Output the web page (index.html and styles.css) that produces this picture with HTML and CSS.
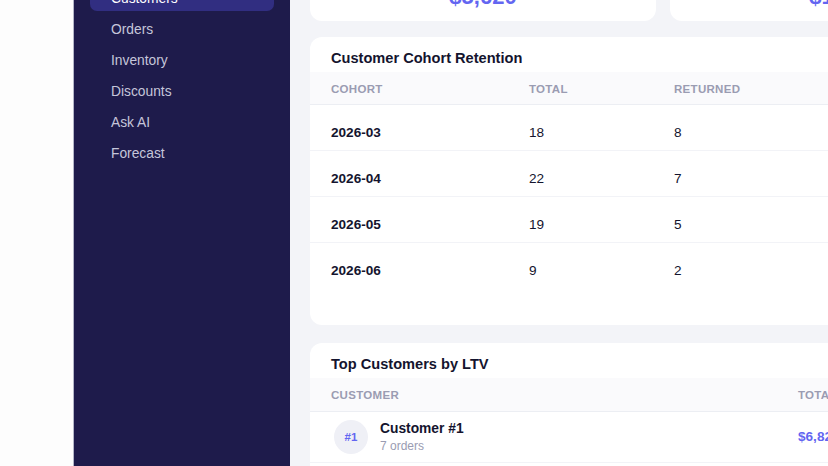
FILE: index.html
```html
<!DOCTYPE html>
<html lang="en">
<head>
    <meta charset="UTF-8">
    <meta name="viewport" content="width=device-width, initial-scale=1.0">
    <title>Customers - Shopdesk</title>
    <link rel="stylesheet" href="styles.css">
</head>
<body>
    <div class="app">
        <aside class="sidebar">
            <div class="brand">
                <span class="brand-mark">S</span>
                <span>Shopdesk</span>
            </div>
            <nav class="nav">
                <a class="nav-item" href="#">Dashboard</a>
                <a class="nav-item" href="#">Products</a>
                <a class="nav-item active" href="#">Customers</a>
                <a class="nav-item" href="#">Orders</a>
                <a class="nav-item" href="#">Inventory</a>
                <a class="nav-item" href="#">Discounts</a>
                <a class="nav-item" href="#">Ask AI</a>
                <a class="nav-item" href="#">Forecast</a>
            </nav>
        </aside>

        <main class="main">
            <div class="page-head">
                <h1>Customers</h1>
                <p>Lifetime value and retention overview</p>
            </div>

            <div class="stats">
                <div class="stat-card">
                    <div class="stat-label">Average Lifetime Value</div>
                    <div class="stat-value">$5,620</div>
                </div>
                <div class="stat-card">
                    <div class="stat-label">Average Order Value</div>
                    <div class="stat-value">$1,240</div>
                </div>
                <div class="stat-card">
                    <div class="stat-label">Repeat Rate</div>
                    <div class="stat-value">31%</div>
                </div>
            </div>

            <section class="card cohort-card">
                <h2>Customer Cohort Retention</h2>
                <table class="cohort-table">
                    <thead>
                        <tr>
                            <th class="col-cohort">Cohort</th>
                            <th class="col-total">Total</th>
                            <th class="col-returned">Returned</th>
                            <th>Retention</th>
                        </tr>
                    </thead>
                    <tbody>
                        <tr>
                            <td class="strong">2026-03</td>
                            <td>18</td>
                            <td>8</td>
                            <td><div class="bar"><span style="width: 44%"></span></div>44%</td>
                        </tr>
                        <tr>
                            <td class="strong">2026-04</td>
                            <td>22</td>
                            <td>7</td>
                            <td><div class="bar"><span style="width: 32%"></span></div>32%</td>
                        </tr>
                        <tr>
                            <td class="strong">2026-05</td>
                            <td>19</td>
                            <td>5</td>
                            <td><div class="bar"><span style="width: 26%"></span></div>26%</td>
                        </tr>
                        <tr>
                            <td class="strong">2026-06</td>
                            <td>9</td>
                            <td>2</td>
                            <td><div class="bar"><span style="width: 22%"></span></div>22%</td>
                        </tr>
                    </tbody>
                </table>
            </section>

            <section class="card">
                <h2>Top Customers by LTV</h2>
                <table class="ltv-table">
                    <thead>
                        <tr>
                            <th class="col-customer">Customer</th>
                            <th>Total Spent</th>
                        </tr>
                    </thead>
                    <tbody>
                        <tr>
                            <td>
                                <div class="customer">
                                    <span class="rank">#1</span>
                                    <div>
                                        <div class="customer-name">Customer #1</div>
                                        <div class="customer-sub">7 orders</div>
                                    </div>
                                </div>
                            </td>
                            <td class="amount">$6,825</td>
                        </tr>
                        <tr>
                            <td>
                                <div class="customer">
                                    <span class="rank">#2</span>
                                    <div>
                                        <div class="customer-name">Customer #2</div>
                                        <div class="customer-sub">5 orders</div>
                                    </div>
                                </div>
                            </td>
                            <td class="amount">$5,910</td>
                        </tr>
                    </tbody>
                </table>
            </section>
        </main>
    </div>
</body>
</html>
```

FILE: styles.css
```css
* {
    box-sizing: border-box;
}
body {
    margin: 0;
    font-family: 'Liberation Sans', Arial, Helvetica, sans-serif;
    color: #14142e;
    background-color: #fdfdfd;
    overflow: hidden;
}
/* page is shown scrolled down a little */
.app {
    display: flex;
    margin-top: -150px;
    padding-left: 73px;
    min-height: 700px;
}
.sidebar {
    width: 217px;
    flex-shrink: 0;
    background-color: #1e1b4b;
    border-left: 1px solid #b3b5c7;
    padding: 20px 16px;
}
.brand {
    display: flex;
    align-items: center;
    gap: 10px;
    height: 32px;
    margin-bottom: 23px;
    padding-left: 5px;
    color: #fff;
    font-weight: bold;
    font-size: 16px;
}
.brand-mark {
    width: 28px;
    height: 28px;
    border-radius: 8px;
    background-color: #6366f1;
    display: flex;
    align-items: center;
    justify-content: center;
}
.nav {
    display: flex;
    flex-direction: column;
    gap: 7px;
}
.nav-item {
    display: block;
    padding: 4px 21px;
    line-height: 16px;
    font-size: 13.8px;
    color: #c5c6da;
    text-decoration: none;
    border-radius: 7px;
}
.nav-item.active {
    background-color: #312e81;
    color: #fff;
}
.main {
    width: 1106px;
    flex-shrink: 0;
    background-color: #f3f4f8;
    padding: 24px 20px;
}
.page-head {
    margin-bottom: 20px;
}
.page-head h1 {
    font-size: 22px;
    line-height: 28px;
    margin: 0 0 4px;
}
.page-head p {
    font-size: 13px;
    line-height: 18px;
    margin: 0;
    color: #8b8da3;
}
.stats {
    display: grid;
    grid-template-columns: repeat(3, 1fr);
    gap: 14px;
    margin-bottom: 16px;
}
.stat-card {
    background-color: #fff;
    border-radius: 12px;
    padding: 18px 16px 11px;
    text-align: center;
}
.stat-label {
    font-size: 13px;
    line-height: 16px;
    color: #8b8da3;
    margin-bottom: 6px;
}
.stat-value {
    font-size: 22px;
    line-height: 26px;
    font-weight: bold;
    color: #6366f1;
}
.card {
    background-color: #fff;
    border-radius: 12px;
    padding-top: 12px;
    margin-bottom: 18px;
    overflow: hidden;
}
.cohort-card {
    padding-bottom: 37px;
}
.card h2 {
    font-size: 14.6px;
    line-height: 18px;
    margin: 0 0 5px;
    padding-left: 21px;
}
table {
    width: 100%;
    border-collapse: collapse;
    table-layout: fixed;
}
th {
    background-color: #fafafc;
    text-align: left;
    font-size: 11.5px;
    font-weight: bold;
    line-height: 14px;
    letter-spacing: 0.3px;
    text-transform: uppercase;
    color: #9a9cb2;
    padding: 10px 21px 8px;
    border-bottom: 1px solid #eceef3;
}
td {
    font-size: 13.6px;
    line-height: 20px;
    padding: 7px 21px;
    border-bottom: 1px solid #f2f3f7;
}
tbody tr:last-child td {
    border-bottom: none;
}
.cohort-table td {
    vertical-align: baseline;
}
.col-cohort {
    width: 198px;
}
.col-total {
    width: 145px;
}
.col-returned {
    width: 220px;
}
.strong {
    font-weight: bold;
}
.bar {
    height: 6px;
    width: 120px;
    margin-bottom: 5px;
    border-radius: 3px;
    background-color: #eceef6;
}
.bar span {
    display: block;
    height: 100%;
    border-radius: 3px;
    background-color: #6366f1;
}
.ltv-table th {
    padding: 10px 21px 9px;
}
.ltv-table td {
    padding: 8px 21px 8px;
    vertical-align: middle;
}
.col-customer {
    width: 467px;
}
.customer {
    display: flex;
    align-items: center;
    gap: 12px;
    margin-left: 3px;
}
.rank {
    width: 34px;
    height: 34px;
    border-radius: 50%;
    background-color: #eff0f6;
    color: #6366f1;
    font-size: 11.5px;
    font-weight: bold;
    display: flex;
    align-items: center;
    justify-content: center;
    flex-shrink: 0;
}
.customer-name {
    font-weight: bold;
    font-size: 13.8px;
    line-height: 18px;
}
.customer-sub {
    font-size: 12px;
    line-height: 16px;
    color: #9a9cb2;
}
.amount {
    font-weight: bold;
    color: #6366f1;
}
```
